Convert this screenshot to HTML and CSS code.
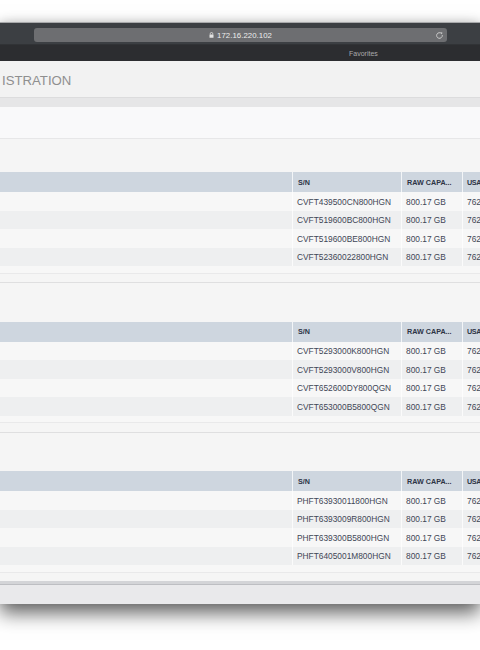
FILE: index.html
```html
<!DOCTYPE html>
<html>
<head>
<meta charset="utf-8">
<link rel="stylesheet" href="styles.css">
</head>
<body>
<div class="window">
  <div class="toolbar">
    <div class="address">
      <span class="addr-side"></span>
      <span class="url">
        <svg class="lock" width="5" height="6" viewBox="0 0 5 6"><path d="M1.2 2.6V1.8a1.3 1.3 0 0 1 2.6 0v0.8" fill="none" stroke="#e2e2e2" stroke-width="0.8"/><rect x="0.5" y="2.6" width="4" height="3.2" rx="0.4" fill="#e2e2e2"/></svg>
        172.16.220.102
      </span>
      <span class="addr-side addr-right">
        <svg class="reload" width="9" height="9" viewBox="0 0 10 10"><path d="M8.2 5a3.2 3.2 0 1 1 -1.1 -2.45" fill="none" stroke="#c9c9c9" stroke-width="1.1" stroke-linecap="round"/><path d="M6.2 1.2 L8.4 1.9 L7.4 3.9 Z" fill="#c9c9c9"/></svg>
      </span>
    </div>
  </div>
  <div class="favbar"><span>Favorites</span></div>
  <div class="page">
    <div class="page-head"><h1 class="title">ISTRATION</h1></div>
    <div class="subbar"></div>
    <div class="tabband"></div>

    <section class="panel first">
      <div class="grid">
        <div class="row head"><div class="c c0"></div><div class="c">S/N</div><div class="c">RAW CAPA...</div><div class="c cl">USA</div></div>
        <div class="row"><div class="c c0"></div><div class="c">CVFT439500CN800HGN</div><div class="c">800.17 GB</div><div class="c cl">762</div></div>
        <div class="row alt"><div class="c c0"></div><div class="c">CVFT519600BC800HGN</div><div class="c">800.17 GB</div><div class="c cl">762</div></div>
        <div class="row"><div class="c c0"></div><div class="c">CVFT519600BE800HGN</div><div class="c">800.17 GB</div><div class="c cl">762</div></div>
        <div class="row alt"><div class="c c0"></div><div class="c">CVFT52360022800HGN</div><div class="c">800.17 GB</div><div class="c cl">762</div></div>
      </div>
    </section>

    <section class="panel">
      <div class="grid">
        <div class="row head"><div class="c c0"></div><div class="c">S/N</div><div class="c">RAW CAPA...</div><div class="c cl">USA</div></div>
        <div class="row"><div class="c c0"></div><div class="c">CVFT5293000K800HGN</div><div class="c">800.17 GB</div><div class="c cl">762</div></div>
        <div class="row alt"><div class="c c0"></div><div class="c">CVFT5293000V800HGN</div><div class="c">800.17 GB</div><div class="c cl">762</div></div>
        <div class="row"><div class="c c0"></div><div class="c">CVFT652600DY800QGN</div><div class="c">800.17 GB</div><div class="c cl">762</div></div>
        <div class="row alt"><div class="c c0"></div><div class="c">CVFT653000B5800QGN</div><div class="c">800.17 GB</div><div class="c cl">762</div></div>
      </div>
    </section>

    <section class="panel last">
      <div class="grid">
        <div class="row head"><div class="c c0"></div><div class="c">S/N</div><div class="c">RAW CAPA...</div><div class="c cl">USA</div></div>
        <div class="row"><div class="c c0"></div><div class="c">PHFT63930011800HGN</div><div class="c">800.17 GB</div><div class="c cl">762</div></div>
        <div class="row alt"><div class="c c0"></div><div class="c">PHFT6393009R800HGN</div><div class="c">800.17 GB</div><div class="c cl">762</div></div>
        <div class="row"><div class="c c0"></div><div class="c">PHFT639300B5800HGN</div><div class="c">800.17 GB</div><div class="c cl">762</div></div>
        <div class="row alt"><div class="c c0"></div><div class="c">PHFT6405001M800HGN</div><div class="c">800.17 GB</div><div class="c cl">762</div></div>
      </div>
    </section>
  </div>
  <div class="statusbar"></div>
</div>
</body>
</html>
```
FILE: styles.css
```css
html, body {
  margin: 0;
  padding: 0;
  background: #ffffff;
  overflow: hidden;
  height: 650px;
}
body {
  font-family: "Liberation Sans", Arial, sans-serif;
}
.window {
  margin-top: 22px;
  border-top: 1px solid #a8a9ab;
  box-shadow: 0 9px 18px rgba(0, 0, 0, 0.62), 0 -2px 8px rgba(0, 0, 0, 0.08);
  overflow: hidden;
  background: #f5f5f5;
}
.toolbar {
  height: 22px;
  background: #3c3f43;
  padding: 5px 33px 0 34px;
  box-sizing: border-box;
  border-bottom: 1px solid #313336;
}
.address {
  height: 14px;
  background: #6d6e71;
  border-radius: 3px;
  display: grid;
  grid-template-columns: 1fr auto 1fr;
  align-items: center;
}
.url {
  color: #ececec;
  font-size: 7.8px;
  display: flex;
  align-items: center;
  gap: 3px;
  letter-spacing: 0.05px;
}
.lock { display: block; }
.addr-right {
  display: flex;
  justify-content: flex-end;
  padding-right: 3px;
}
.reload { display: block; }
.favbar {
  height: 16px;
  background: #2c2d30;
  padding-left: 349px;
  display: flex;
  align-items: center;
}
.favbar span {
  color: #a9aaac;
  font-size: 7px;
}
.page-head {
  height: 36px;
  background: #f2f2f2;
  box-sizing: border-box;
  padding: 12px 0 0 2px;
}
.title {
  margin: 0;
  font-size: 13.2px;
  line-height: 15px;
  font-weight: normal;
  color: #8f8f8f;
}
.subbar {
  height: 9px;
  border-top: 1px solid #dcdcdd;
  background: #e6e6e7;
}
.tabband {
  height: 31px;
  background: #f9f9fa;
  border-bottom: 1px solid #e7e7e8;
}
.panel {
  padding: 38.5px 0 8.5px;
  border-bottom: 1px solid #dfdfe0;
  background: #f5f5f5;
}
.panel.first { padding-top: 33px; }
.panel.last { border-bottom: 0; padding-bottom: 8px; }
.grid {
  border-bottom: 1px solid #e9e9ea;
  padding-bottom: 6.5px;
  background: #f7f7f7;
}
.row {
  display: grid;
  grid-template-columns: 292px 109px 61px 1fr;
  height: 18.5px;
  background: #f7f7f7;
}
.row.alt { background: #eeeff0; }
.row.head {
  height: 20px;
  background: #ced6df;
}
.c {
  border-left: 1px solid rgba(255, 255, 255, 0.75);
  padding: 1px 0 0 4px;
  display: flex;
  align-items: center;
  font-size: 8.35px;
  color: #3f4656;
  white-space: nowrap;
  overflow: hidden;
}
.c.c0 { border-left: 0; }
.row.head .c {
  font-size: 7.2px;
  font-weight: bold;
  color: #2d3445;
  padding: 0 0 0 5px;
}
.row .c.cl { padding-left: 4px; }
.row.head .c.cl {
  padding-left: 4px;
  letter-spacing: -0.35px;
}
.statusbar {
  height: 20px;
  border-top: 3px solid #d3d4d7;
  box-shadow: inset 0 1px 0 #bdbec2;
  background: #e9e9eb;
}
```
